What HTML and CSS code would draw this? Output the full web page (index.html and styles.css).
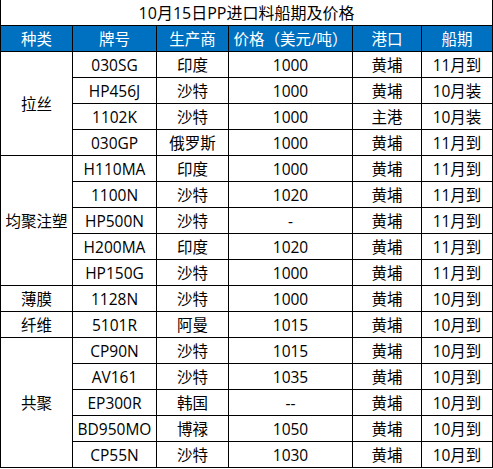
FILE: index.html
```html
<!DOCTYPE html>
<html lang="zh">
<head>
    <meta charset="UTF-8">
    <title>10月15日PP进口料船期及价格</title>
    <link rel="stylesheet" href="styles.css">
</head>
<body>
    <table class="price-table">
        <colgroup>
            <col class="c-type">
            <col class="c-grade">
            <col class="c-maker">
            <col class="c-price">
            <col class="c-port">
            <col class="c-ship">
        </colgroup>
        <tr class="title-row">
            <td colspan="6">10月15日PP进口料船期及价格</td>
        </tr>
        <tr class="head-row">
            <th>种类</th>
            <th>牌号</th>
            <th>生产商</th>
            <th>价格（美元/吨）</th>
            <th>港口</th>
            <th>船期</th>
        </tr>
        <tr>
            <td rowspan="4">拉丝</td>
            <td>030SG</td><td>印度</td><td>1000</td><td>黄埔</td><td>11月到</td>
        </tr>
        <tr><td>HP456J</td><td>沙特</td><td>1000</td><td>黄埔</td><td>10月装</td></tr>
        <tr><td>1102K</td><td>沙特</td><td>1000</td><td>主港</td><td>10月装</td></tr>
        <tr><td>030GP</td><td>俄罗斯</td><td>1000</td><td>黄埔</td><td>11月到</td></tr>
        <tr>
            <td rowspan="5">均聚注塑</td>
            <td>H110MA</td><td>印度</td><td>1000</td><td>黄埔</td><td>11月到</td>
        </tr>
        <tr><td>1100N</td><td>沙特</td><td>1020</td><td>黄埔</td><td>11月到</td></tr>
        <tr><td>HP500N</td><td>沙特</td><td>-</td><td>黄埔</td><td>11月到</td></tr>
        <tr><td>H200MA</td><td>印度</td><td>1020</td><td>黄埔</td><td>11月到</td></tr>
        <tr><td>HP150G</td><td>沙特</td><td>1000</td><td>黄埔</td><td>11月到</td></tr>
        <tr>
            <td>薄膜</td>
            <td>1128N</td><td>沙特</td><td>1000</td><td>黄埔</td><td>10月到</td>
        </tr>
        <tr>
            <td>纤维</td>
            <td>5101R</td><td>阿曼</td><td>1015</td><td>黄埔</td><td>10月到</td>
        </tr>
        <tr>
            <td rowspan="5">共聚</td>
            <td>CP90N</td><td>沙特</td><td>1015</td><td>黄埔</td><td>10月到</td>
        </tr>
        <tr><td>AV161</td><td>沙特</td><td>1035</td><td>黄埔</td><td>10月到</td></tr>
        <tr><td>EP300R</td><td>韩国</td><td>--</td><td>黄埔</td><td>10月到</td></tr>
        <tr><td>BD950MO</td><td>博禄</td><td>1050</td><td>黄埔</td><td>10月到</td></tr>
        <tr><td>CP55N</td><td>沙特</td><td>1030</td><td>黄埔</td><td>10月到</td></tr>
    </table>
</body>
</html>
```

FILE: styles.css
```css
body {
    margin: 0;
    background-color: white;
    font-family: "Open Sans", "Noto Sans CJK SC", sans-serif;
    color: black;
}

.price-table {
    border-collapse: collapse;
    table-layout: fixed;
    width: 492px;
}

.c-type { width: 72px; }
.c-grade { width: 84px; }
.c-maker { width: 72px; }
.c-price { width: 124px; }
.c-port { width: 69px; }
.c-ship { width: 71px; }

.price-table td,
.price-table th {
    border: 1px solid black;
    height: 25px;
    padding: 0;
    text-align: center;
    vertical-align: middle;
    font-size: 15.5px;
    font-weight: normal;
    line-height: 20px;
    white-space: nowrap;
}

.title-row td {
    border-top: none;
    font-size: 16px;
}

.head-row th {
    background-color: #0070c0;
    color: white;
}
```
